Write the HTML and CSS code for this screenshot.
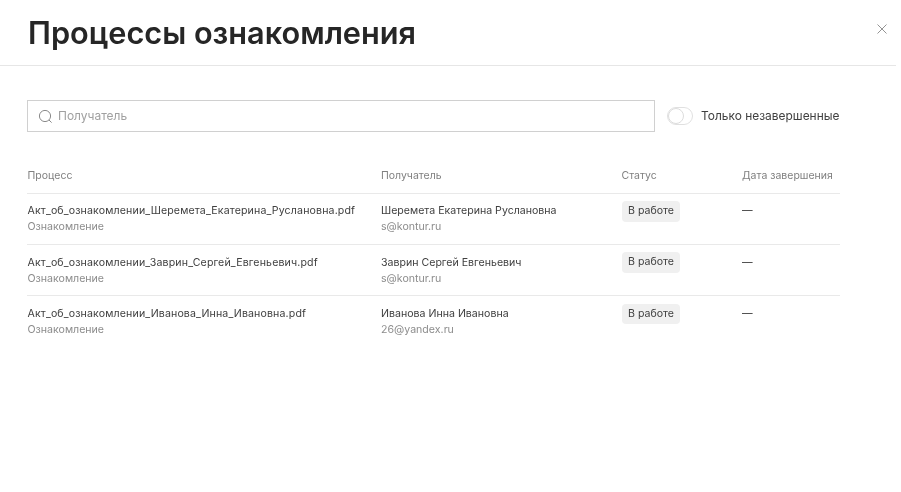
FILE: index.html
```html
<!DOCTYPE html>
<html lang="ru">
<head>
<meta charset="utf-8">
<title>Процессы ознакомления</title>
<link rel="stylesheet" href="styles.css">
</head>
<body>
<div class="modal">
  <header class="head">
    <h1 class="title">Процессы ознакомления</h1>
    <button class="close" aria-label="Закрыть">
      <svg width="10" height="10" viewBox="0 0 10 10"><path d="M.5.5l9 9M9.5.5l-9 9" stroke="#949494" stroke-width="1" fill="none"/></svg>
    </button>
  </header>
  <main class="body">
    <div class="filters">
      <label class="search">
        <svg class="search-icon" width="15" height="15" viewBox="0 0 15 15"><circle cx="7" cy="7" r="5.6" stroke="#8a8a8a" fill="none"/><path d="M11 11l2.6 2.6" stroke="#8a8a8a" fill="none"/></svg>
        <span class="placeholder">Получатель</span>
      </label>
      <div class="toggle-wrap">
        <span class="toggle"><span class="knob"></span></span>
        <span class="toggle-label">Только незавершенные</span>
      </div>
    </div>
    <div class="table">
      <div class="row row-head">
        <div>Процесс</div><div>Получатель</div><div>Статус</div><div>Дата завершения</div>
      </div>
      <div class="row">
        <div><div class="main file">Акт_об_ознакомлении_Шеремета_Екатерина_Руслановна.pdf</div><div class="sub">Ознакомление</div></div>
        <div><div class="main">Шеремета Екатерина Руслановна</div><div class="sub">s@kontur.ru</div></div>
        <div><span class="badge">В работе</span></div>
        <div class="dash">—</div>
      </div>
      <div class="row">
        <div><div class="main file">Акт_об_ознакомлении_Заврин_Сергей_Евгеньевич.pdf</div><div class="sub">Ознакомление</div></div>
        <div><div class="main">Заврин Сергей Евгеньевич</div><div class="sub">s@kontur.ru</div></div>
        <div><span class="badge">В работе</span></div>
        <div class="dash">—</div>
      </div>
      <div class="row">
        <div><div class="main file">Акт_об_ознакомлении_Иванова_Инна_Ивановна.pdf</div><div class="sub">Ознакомление</div></div>
        <div><div class="main">Иванова Инна Ивановна</div><div class="sub">26@yandex.ru</div></div>
        <div><span class="badge">В работе</span></div>
        <div class="dash">—</div>
      </div>
    </div>
  </main>
</div>
</body>
</html>
```
FILE: styles.css
```css
* { box-sizing: border-box; }
html, body { margin: 0; height: 100%; background: #fff; overflow: hidden; }
body { font-family: Inter, "Liberation Sans", sans-serif; color: #333; }
.modal { width: 896px; will-change: opacity; }
.head {
  height: 66px;
  padding: 0 9px 0 28px;
  border-bottom: 1px solid #e6e6e6;
  display: flex;
  align-items: flex-start;
  justify-content: space-between;
}
.title {
  margin: 13px 0 0;
  font-size: 30.7px;
  line-height: 40px;
  font-weight: 600;
  color: #262626;
}
.close { margin: 24px 0 0; padding: 0; border: 0; background: none; width: 10px; height: 10px; line-height: 0; }
.body { padding: 34px 56px 0 27px; }
.filters { display: flex; align-items: center; gap: 12px; }
.search {
  flex: none;
  width: 628px;
  height: 32px;
  border: 1px solid #d0d0d0;
  display: flex;
  align-items: center;
  gap: 5px;
  padding-left: 10px;
}
.placeholder { font-size: 12px; line-height: 16px; padding-bottom: 1px; color: #a0a0a0; }
.toggle-wrap { display: flex; align-items: center; gap: 8px; white-space: nowrap; }
.toggle {
  width: 26px; height: 18px;
  border: 1px solid #e0e0e0;
  border-radius: 9px;
  display: block;
}
.knob { display: block; width: 16px; height: 16px; border-radius: 50%; border: 1px solid #dcdcdc; }
.toggle-label { font-size: 11.95px; line-height: 16px; padding-bottom: 1px; color: #404040; }
.table { margin-top: 27px; }
.row {
  display: grid;
  grid-template-columns: 353.5px 240.5px 120.5px 98px;
  height: 51.2px;
  padding: 9.4px 0 0 .5px;
  border-bottom: 1px solid #e9e9e9;
}
.row:last-child { border-bottom: 0; }
.row-head {
  height: 35px;
  padding-top: 9px;
  font-size: 10.5px;
  line-height: 16px;
  color: #808080;
}
.main { font-size: 10.6px; line-height: 16px; color: #404040; }
.file { letter-spacing: .14px; }
.dash { font-size: 10.6px; line-height: 16px; color: #333; }
.sub { font-size: 10.6px; line-height: 16px; color: #8c8c8c; }
.badge {
  display: block;
  width: 58px;
  height: 20.4px;
  margin-top: -2.2px;
  padding-left: 1px;
  border-radius: 4px;
  background: #f0f0f0;
  font-size: 10.6px;
  line-height: 20.4px;
  text-align: center;
  color: #404040;
}
```
